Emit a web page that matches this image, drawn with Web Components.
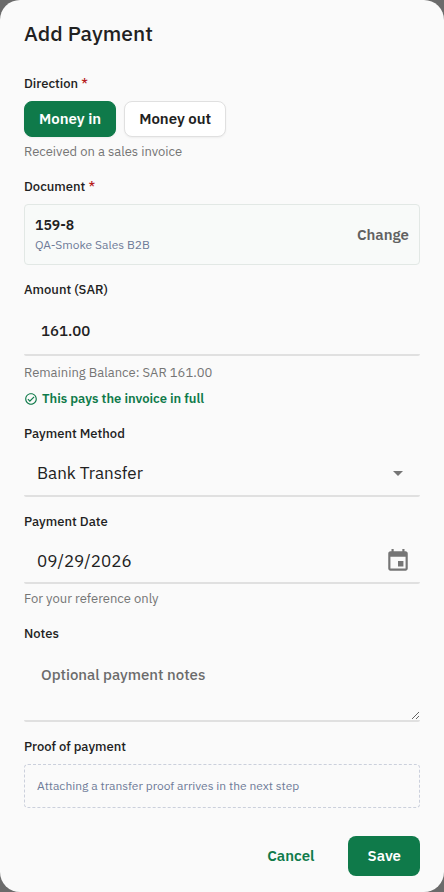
<!DOCTYPE html>
<html lang="en">
<head>
<meta charset="utf-8">
<meta name="viewport" content="width=device-width, initial-scale=1">
<title>Add Payment</title>
<style>
  body {
    margin: 0;
    min-height: 100vh;
    background: #6b6b6b;
    color: #212121;
    font-family: "IBM Plex Sans", "Noto Sans", sans-serif;
    --primary: #0f7a4a;
    --line: #e0e0e0;
    --muted: #757575;
    --slate: #6e7b98;
  }
</style>
</head>
<body>
<payment-dialog heading="Add Payment">
  <direction-field></direction-field>
  <document-field number="159-8" customer="QA-Smoke Sales B2B"></document-field>
  <amount-field value="161.00">
    <span slot="balance">Remaining Balance: SAR 161.00</span>
    <span slot="status">This pays the invoice in full</span>
  </amount-field>
  <method-field></method-field>
  <date-field value="09/29/2026">For your reference only</date-field>
  <notes-field></notes-field>
  <proof-field>Attaching a transfer proof arrives in the next step</proof-field>
  <action-button slot="actions" variant="text">Cancel</action-button>
  <action-button slot="actions" variant="filled">Save</action-button>
</payment-dialog>

<script>
// Styles that all the form fields share.
const fieldStyles = `
  :host { display: block; }
  * { box-sizing: border-box; }
  button, input, select, textarea {
    font: inherit;
    color: inherit;
    margin: 0;
  }
  button { cursor: pointer; }
  fieldset { border: 0; margin: 0; padding: 0; min-width: 0; }
  .label {
    display: block;
    padding: 0;
    margin: 0 0 8px;
    font-size: 13px;
    font-weight: 500;
    line-height: 18px;
  }
  .required { color: #b71c1c; }
  .hint {
    margin: 5px 0 0;
    font-size: 13px;
    line-height: 20px;
    color: var(--muted);
  }
  .control {
    display: block;
    width: 100%;
    border: 0;
    border-bottom: 2px solid var(--line);
    border-radius: 2px;
    background: transparent;
    outline: 0;
  }
  .control:focus { border-bottom-color: var(--primary); }
`

/**
 * Base class for the fields, it attaches the shadow root
 * with the shared styles and the markup of the field.
 */
class BaseField extends HTMLElement {
  constructor () {
    super()
    this.attachShadow({ mode: 'open' })
  }

  connectedCallback () {
    const template = document.createElement('template')
    template.innerHTML = `<style>${fieldStyles}</style>${this.render()}`
    this.shadowRoot.replaceChildren(template.content.cloneNode(true))
    this.afterRender()
  }

  afterRender () {}
}

customElements.define('payment-dialog',
  class extends HTMLElement {
    constructor () {
      super()
      this.attachShadow({ mode: 'open' })
      this.shadowRoot.innerHTML = `
        <style>
          :host { display: block; }
          section {
            box-sizing: border-box;
            min-height: 100vh;
            padding: 17px 24px 16px;
            border-radius: 20px;
            background: #fafafa;
          }
          h2 {
            margin: 0 0 26px;
            font-size: 21px;
            font-weight: 500;
            line-height: 32px;
          }
          form { display: flex; flex-direction: column; gap: 16px; }
          footer {
            display: flex;
            justify-content: flex-end;
            gap: 15px;
            padding-top: 12px;
          }
        </style>
        <section role="dialog" aria-labelledby="heading">
          <h2 id="heading"></h2>
          <form>
            <slot></slot>
            <footer><slot name="actions"></slot></footer>
          </form>
        </section>
      `
    }

    connectedCallback () {
      this.shadowRoot.querySelector('h2').textContent = this.getAttribute('heading')
    }
  })

customElements.define('direction-field',
  class extends BaseField {
    #hints = { in: 'Received on a sales invoice', out: 'Paid on a purchase invoice' }

    render () {
      return `
        <style>
          .options { display: flex; gap: 8px; }
          .options button {
            padding: 7px 14px;
            border: 1px solid var(--line);
            border-radius: 8px;
            background: #fff;
            font-size: 15px;
            font-weight: 600;
            line-height: 20px;
            box-shadow: 0 1px 2px rgba(0, 0, 0, 0.05);
          }
          .options button[aria-pressed="true"] {
            border-color: var(--primary);
            background: var(--primary);
            color: #fff;
          }
        </style>
        <fieldset>
          <legend class="label">Direction <span class="required">*</span></legend>
          <div class="options">
            <button type="button" data-direction="in" aria-pressed="true">Money in</button>
            <button type="button" data-direction="out" aria-pressed="false">Money out</button>
          </div>
          <p class="hint">${this.#hints.in}</p>
        </fieldset>
      `
    }

    afterRender () {
      const buttons = this.shadowRoot.querySelectorAll('button')
      buttons.forEach(button => button.addEventListener('click', () => {
        buttons.forEach(other => other.setAttribute('aria-pressed', other === button))
        this.shadowRoot.querySelector('.hint').textContent = this.#hints[button.dataset.direction]
      }))
    }
  })

customElements.define('document-field',
  class extends BaseField {
    render () {
      return `
        <style>
          .card {
            display: flex;
            align-items: center;
            justify-content: space-between;
            padding: 10px;
            border: 1px solid #e2e8e5;
            border-radius: 4px;
            background: #f8faf9;
          }
          .number { font-size: 14px; font-weight: 600; line-height: 20px; }
          .customer { font-size: 12px; line-height: 19px; color: var(--slate); }
          button {
            padding: 0;
            border: 0;
            background: none;
            color: #616161;
            font-size: 15px;
            font-weight: 600;
          }
        </style>
        <fieldset>
          <legend class="label">Document <span class="required">*</span></legend>
          <div class="card">
            <div>
              <div class="number">${this.getAttribute('number')}</div>
              <div class="customer">${this.getAttribute('customer')}</div>
            </div>
            <button type="button">Change</button>
          </div>
        </fieldset>
      `
    }
  })

customElements.define('amount-field',
  class extends BaseField {
    render () {
      return `
        <style>
          .control {
            height: 49px;
            padding: 0 17px;
            font-size: 15px;
            font-weight: 500;
          }
          .hint { margin-top: 7px; }
          .status {
            display: flex;
            align-items: center;
            gap: 4px;
            margin-top: 6px;
            color: var(--primary);
            font-weight: 600;
          }
        </style>
        <label class="label" for="amount">Amount (SAR)</label>
        <input class="control" id="amount" type="text" inputmode="decimal" value="${this.getAttribute('value')}">
        <p class="hint"><slot name="balance"></slot></p>
        <p class="hint status">
          <svg width="14" height="14" viewBox="0 0 24 24" fill="currentColor" aria-hidden="true">
            <path d="M12 2C6.48 2 2 6.48 2 12s4.48 10 10 10 10-4.48 10-10S17.52 2 12 2zm0 18c-4.41 0-8-3.59-8-8s3.59-8 8-8 8 3.59 8 8-3.59 8-8 8zm4.59-12.42L10 14.17l-2.59-2.58L6 13l4 4 8-8z"/>
          </svg>
          <slot name="status"></slot>
        </p>
      `
    }
  })

customElements.define('method-field',
  class extends BaseField {
    render () {
      return `
        <style>
          .select { display: grid; align-items: center; }
          .select > * { grid-area: 1 / 1; }
          .control {
            height: 46px;
            padding: 0 44px 0 13px;
            font-size: 17px;
            appearance: none;
          }
          svg { justify-self: end; margin: 0 10px 2px 0; pointer-events: none; }
        </style>
        <label class="label" for="method">Payment Method</label>
        <div class="select">
          <select class="control" id="method">
            <option>Bank Transfer</option>
            <option>Cash</option>
            <option>Cheque</option>
          </select>
          <svg width="24" height="24" viewBox="0 0 24 24" fill="#757575" aria-hidden="true">
            <path d="m7 10 5 5 5-5z"/>
          </svg>
        </div>
      `
    }
  })

customElements.define('date-field',
  class extends BaseField {
    render () {
      return `
        <style>
          .date {
            display: flex;
            align-items: center;
            padding-right: 9px;
            border-bottom: 2px solid var(--line);
            border-radius: 2px;
          }
          .control {
            flex: 1;
            min-width: 0;
            height: 43px;
            padding: 0 13px;
            border: 0;
            font-size: 17px;
          }
          button { display: flex; padding: 0; border: 0; background: none; }
        </style>
        <label class="label" for="date">Payment Date</label>
        <div class="date">
          <input class="control" id="date" type="text" placeholder="MM/DD/YYYY" value="${this.getAttribute('value')}">
          <button type="button" aria-label="Choose date">
            <svg width="26" height="26" viewBox="0 0 24 24" fill="#757575" aria-hidden="true">
              <path d="M17 12h-5v5h5v-5zM16 1v2H8V1H6v2H5c-1.11 0-1.99.9-1.99 2L3 19c0 1.1.89 2 2 2h14c1.1 0 2-.9 2-2V5c0-1.1-.9-2-2-2h-1V1h-2zm3 18H5V8h14v11z"/>
            </svg>
          </button>
        </div>
        <p class="hint"><slot></slot></p>
      `
    }
  })

customElements.define('notes-field',
  class extends BaseField {
    render () {
      return `
        <style>
          .control {
            height: 71px;
            min-height: 71px;
            padding: 12px 17px;
            font-size: 15px;
            font-weight: 500;
            line-height: 24px;
            resize: vertical;
          }
          .control::placeholder { color: #6b6b6b; opacity: 1; }
        </style>
        <label class="label" for="notes">Notes</label>
        <textarea class="control" id="notes" placeholder="Optional payment notes"></textarea>
      `
    }
  })

customElements.define('proof-field',
  class extends BaseField {
    render () {
      return `
        <style>
          .drop {
            padding: 12px;
            border: 1px dashed #cbd0dc;
            border-radius: 4px;
            color: var(--slate);
            font-size: 12px;
            line-height: 18px;
          }
        </style>
        <div class="label">Proof of payment</div>
        <div class="drop"><slot></slot></div>
      `
    }
  })

customElements.define('action-button',
  class extends HTMLElement {
    constructor () {
      super()
      this.attachShadow({ mode: 'open' })
      this.shadowRoot.innerHTML = `
        <style>
          :host { display: block; }
          button {
            padding: 10px 19px;
            border: 0;
            border-radius: 8px;
            background: none;
            color: var(--primary);
            font: inherit;
            font-size: 15px;
            font-weight: 600;
            line-height: 20px;
            cursor: pointer;
          }
          :host([variant="filled"]) button {
            background: var(--primary);
            color: #fff;
          }
        </style>
        <button type="button"><slot></slot></button>
      `
    }
  })
</script>
</body>
</html>
